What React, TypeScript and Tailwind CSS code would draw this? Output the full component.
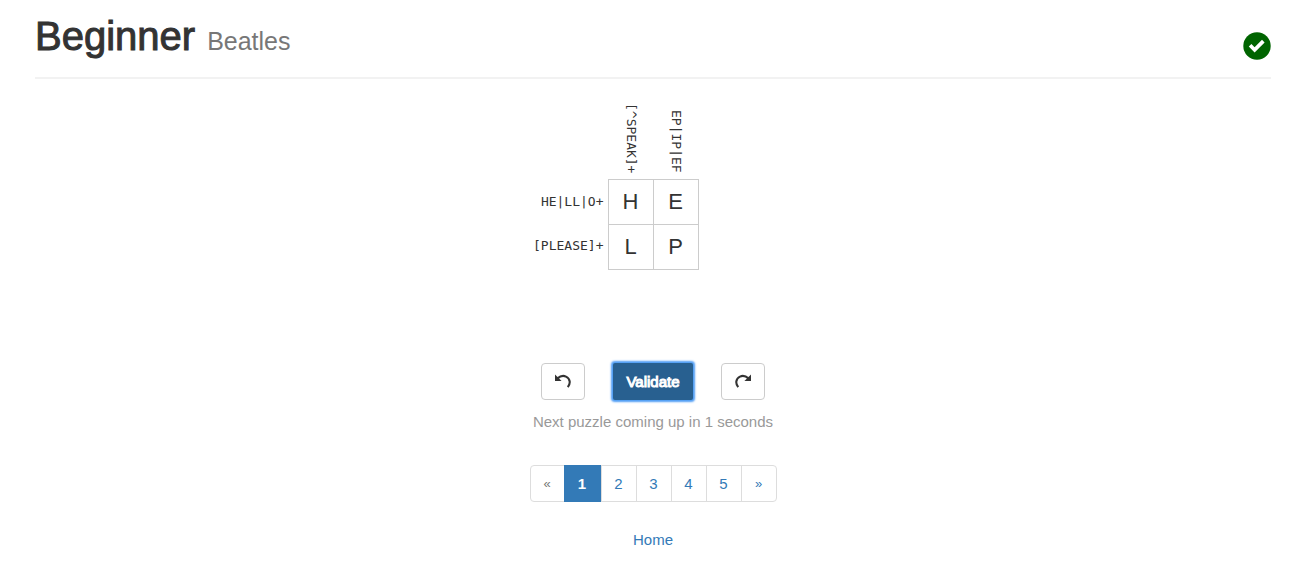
const columnClues = ["[^SPEAK]+", "EP|IP|EF"];
const rowClues = ["HE|LL|O+", "[PLEASE]+"];
const letters = [
  ["H", "E"],
  ["L", "P"],
];
const pages = ["2", "3", "4", "5"];

function ArrowIcon({ flipped = false }: { flipped?: boolean }) {
  return (
    <svg
      viewBox="0 0 16 16"
      aria-hidden="true"
      className={flipped ? "size-4 -scale-x-100" : "size-4"}
    >
      <path d="M0 0.6 L0 7 L6.6 7 Z" fill="#333" />
      <path d="M2.5 4.4 C5 2.2 8.4 1.3 11 2.6 C15.2 4.6 15.9 9.4 12.8 13.2" fill="none" stroke="#333" strokeWidth="2.1" />
    </svg>
  );
}

function Header() {
  return (
    <header className="flex items-start justify-between border-b-2 border-[#f2f2f2] pb-4">
      <h1 className="flex items-baseline gap-3 text-[40px] leading-10 text-[#333]">
        <span className="[-webkit-text-stroke:1px_#333]">Beginner</span>
        <small className="text-[25px] text-[#777]">Beatles</small>
      </h1>
      <svg viewBox="0 0 28 28" role="img" aria-label="Solved" className="mt-4 size-7">
        <circle cx="14" cy="14" r="13.7" fill="#006400" />
        <path d="M5.8 14.6 L8.4 12 L11.6 15.2 L19 7.8 L21.6 10.4 L11.6 20.4 Z" fill="#fff" />
      </svg>
    </header>
  );
}

function Puzzle() {
  return (
    <section
      aria-label="Puzzle"
      className="grid grid-cols-[1fr_auto_1fr] font-['DejaVu_Sans_Mono',monospace] text-[13px] leading-4 text-[#333]"
    >
      <div className="col-start-2 flex h-18 gap-px px-px pb-1.5">
        {columnClues.map((clue) => (
          <div key={clue} className="flex w-11 items-center justify-end [writing-mode:vertical-rl]">
            {clue}
          </div>
        ))}
      </div>
      <div className="col-start-1 flex flex-col py-px pr-1">
        {rowClues.map((clue) => (
          <div key={clue} className="flex h-11 items-center justify-end">
            {clue}
          </div>
        ))}
      </div>
      <div className="grid grid-cols-2 gap-px border border-[#ccc] bg-[#ccc]">
        {letters.map((row, r) =>
          row.map((letter, c) => (
            <input
              key={`${r}${c}`}
              aria-label={`Row ${r + 1}, column ${c + 1}`}
              defaultValue={letter}
              maxLength={1}
              className="size-11 bg-white text-center font-['Liberation_Sans',sans-serif] text-[22px] text-[#333]"
            />
          )),
        )}
      </div>
    </section>
  );
}

const sideButton =
  "flex h-[37px] w-11 items-center justify-center rounded-sm border border-[#ccc] bg-white";
const pageLink =
  "flex h-full w-[35px] items-center justify-center border-l border-[#ddd] text-[#337ab7]";

export default function App() {
  return (
    <div className="bg-white pr-[27px] pl-[35px] pt-4 font-['Liberation_Sans',Arial,sans-serif] text-[15px] leading-5">
      <Header />
      <main className="flex flex-col items-stretch pt-7">
        <Puzzle />
        <div className="mt-[93px] flex items-center justify-center gap-7">
          <button type="button" aria-label="Undo" className={sideButton}>
            <ArrowIcon />
          </button>
          <button
            type="button"
            className="h-[37px] rounded-xs bg-[#286090] px-[13px] text-white shadow-[0_0_2px_2px_#4f9df5] [-webkit-text-stroke:1px_#fff]"
          >
            Validate
          </button>
          <button type="button" aria-label="Redo" className={sideButton}>
            <ArrowIcon flipped />
          </button>
        </div>
        <p className="mt-3 text-center text-[#999]">Next puzzle coming up in 1 seconds</p>
        <nav aria-label="Puzzles" className="mt-[33px] flex justify-center">
          <ul className="flex h-[37px] rounded-sm border border-[#ddd]">
            <li className="flex w-[33px] items-center justify-center text-[13px] text-[#777]">«</li>
            <li className="-my-px">
              <a
                href="#1"
                aria-current="page"
                className="flex h-full w-[37px] items-center justify-center bg-[#337ab7] font-bold text-white"
              >
                1
              </a>
            </li>
            {pages.map((page) => (
              <li key={page}>
                <a href={`#${page}`} className={pageLink}>
                  {page}
                </a>
              </li>
            ))}
            <li className="text-[13px]">
              <a href="#2" aria-label="Next" className={pageLink}>
                »
              </a>
            </li>
          </ul>
        </nav>
        <a href="#home" className="mt-7 self-center text-[#337ab7]">
          Home
        </a>
      </main>
    </div>
  );
}
